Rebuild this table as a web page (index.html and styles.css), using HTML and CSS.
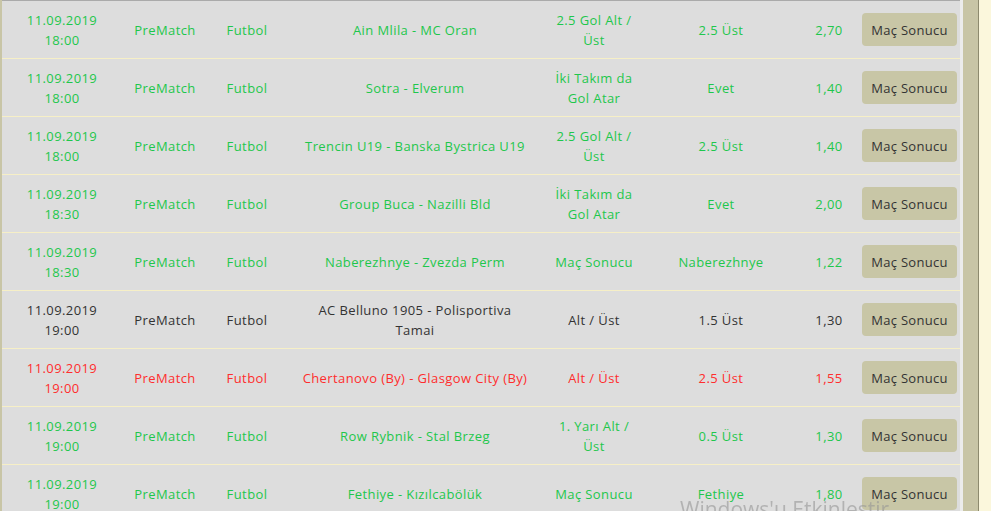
FILE: index.html
```html
<!DOCTYPE html>
<html>
<head>
  <title>Kuponlar</title>
  <link rel="stylesheet" href="styles.css">
</head>
<body>
  <div class="page">
    <div class="content">
      <table class="bets">
        <colgroup>
          <col class="c-date">
          <col class="c-type">
          <col class="c-sport">
          <col class="c-match">
          <col class="c-market">
          <col class="c-pick">
          <col class="c-odd">
          <col class="c-btn">
        </colgroup>
        <tbody>
          <tr class="win">
            <td>11.09.2019<br>18:00</td><td>PreMatch</td><td>Futbol</td>
            <td>Ain Mlila - MC Oran</td><td>2.5 Gol Alt / Üst</td><td>2.5 Üst</td><td>2,70</td>
            <td><button class="result-btn">Maç Sonucu</button></td>
          </tr>
          <tr class="win">
            <td>11.09.2019<br>18:00</td><td>PreMatch</td><td>Futbol</td>
            <td>Sotra - Elverum</td><td>İki Takım da Gol Atar</td><td>Evet</td><td>1,40</td>
            <td><button class="result-btn">Maç Sonucu</button></td>
          </tr>
          <tr class="win">
            <td>11.09.2019<br>18:00</td><td>PreMatch</td><td>Futbol</td>
            <td>Trencin U19 - Banska Bystrica U19</td><td>2.5 Gol Alt / Üst</td><td>2.5 Üst</td><td>1,40</td>
            <td><button class="result-btn">Maç Sonucu</button></td>
          </tr>
          <tr class="win">
            <td>11.09.2019<br>18:30</td><td>PreMatch</td><td>Futbol</td>
            <td>Group Buca - Nazilli Bld</td><td>İki Takım da Gol Atar</td><td>Evet</td><td>2,00</td>
            <td><button class="result-btn">Maç Sonucu</button></td>
          </tr>
          <tr class="win">
            <td>11.09.2019<br>18:30</td><td>PreMatch</td><td>Futbol</td>
            <td>Naberezhnye - Zvezda Perm</td><td>Maç Sonucu</td><td>Naberezhnye</td><td>1,22</td>
            <td><button class="result-btn">Maç Sonucu</button></td>
          </tr>
          <tr class="open">
            <td>11.09.2019<br>19:00</td><td>PreMatch</td><td>Futbol</td>
            <td>AC Belluno 1905 - Polisportiva<br>Tamai</td><td>Alt / Üst</td><td>1.5 Üst</td><td>1,30</td>
            <td><button class="result-btn">Maç Sonucu</button></td>
          </tr>
          <tr class="lost">
            <td>11.09.2019<br>19:00</td><td>PreMatch</td><td>Futbol</td>
            <td>Chertanovo (By) - Glasgow City (By)</td><td>Alt / Üst</td><td>2.5 Üst</td><td>1,55</td>
            <td><button class="result-btn">Maç Sonucu</button></td>
          </tr>
          <tr class="win">
            <td>11.09.2019<br>19:00</td><td>PreMatch</td><td>Futbol</td>
            <td>Row Rybnik - Stal Brzeg</td><td>1. Yarı Alt / Üst</td><td>0.5 Üst</td><td>1,30</td>
            <td><button class="result-btn">Maç Sonucu</button></td>
          </tr>
          <tr class="win">
            <td>11.09.2019<br>19:00</td><td>PreMatch</td><td>Futbol</td>
            <td>Fethiye - Kızılcabölük</td><td>Maç Sonucu</td><td>Fethiye</td><td>1,80</td>
            <td><button class="result-btn">Maç Sonucu</button></td>
          </tr>
        </tbody>
      </table>
    </div>
    <div class="side-bar"></div>
    <div class="side-rest"></div>
  </div>

  <!-- windows activation watermark -->
  <div class="watermark">Windows'u Etkinleştir</div>
</body>
</html>
```

FILE: styles.css
```css
body {
  margin: 0;
  background-color: #fbf7dc;
  font-family: "Open Sans", Arial, sans-serif;
  font-size: 13px;
  overflow: hidden;
}

.page {
  display: flex;
  height: 511px;
}

.content {
  width: 958px;
  border-left: 2px solid #c8c5a6;
  border-right: 3px solid #ececec;
  background-color: #dddddd;
}

.side-bar {
  width: 15px;
  background-color: #c8c5a6;
  border-right: 1px solid #8d8a6e;
}

.side-rest {
  flex: 1;
}

.bets {
  width: 958px;
  border-collapse: collapse;
  table-layout: fixed;
  border-top: 1px solid #aaaaaa;
}

.c-date { width: 120px; }
.c-type { width: 86px; }
.c-sport { width: 78px; }
.c-match { width: 258px; }
.c-market { width: 100px; }
.c-pick { width: 154px; }
.c-odd { width: 62px; }
.c-btn { width: 100px; }

.bets td {
  height: 57px;
  padding: 0 4px;
  text-align: center;
  vertical-align: middle;
  line-height: 20px;
  letter-spacing: 0.4px;
  border-bottom: 1px solid #f6efc6;
}

.bets td:last-child {
  padding: 0 0 0 2px;
  text-align: left;
}

.win td {
  color: #1ec74c;
}

.open td {
  color: #333333;
}

.lost td {
  color: #ff2d2d;
}

.result-btn {
  width: 95px;
  height: 33px;
  border: none;
  border-radius: 4px;
  background-color: #c8c6a6;
  color: #333333;
  font-family: "Open Sans", Arial, sans-serif;
  font-size: 13px;
  letter-spacing: 0.3px;
  cursor: pointer;
}

.watermark {
  position: fixed;
  left: 680px;
  top: 495px;
  font-family: "Open Sans", Arial, sans-serif;
  font-size: 21px;
  color: rgba(150, 150, 150, 0.6);
  pointer-events: none;
}
```
